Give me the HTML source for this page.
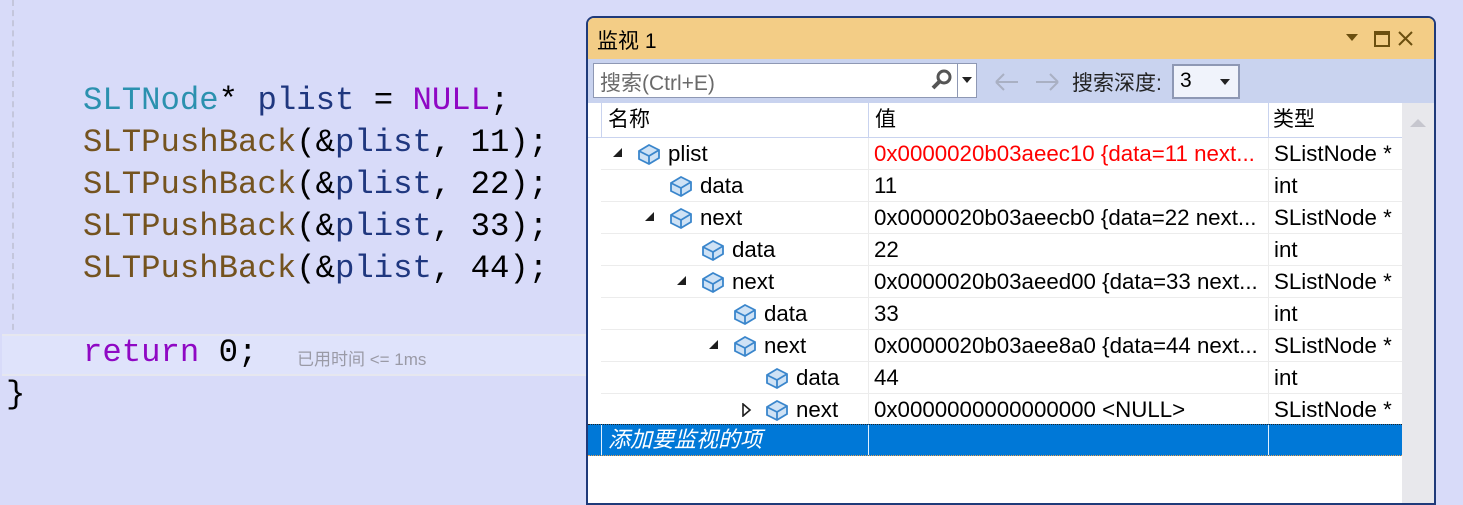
<!DOCTYPE html>
<html><head><meta charset="utf-8"><style>
body{margin:0;width:1463px;height:495px;background:#d8dbf9;position:relative;overflow:hidden;font-family:"Liberation Sans","Noto Sans CJK SC",sans-serif}
.code{position:absolute;left:83px;font-family:"Liberation Mono",monospace;font-size:32.3px;line-height:42px;white-space:pre;color:#000}
.t{color:#2b91af}.f{color:#74531f}.v{color:#1f377f}.k{color:#8f08c4}
.dash{position:absolute;left:12px;top:0;width:0;height:340px;border-left:2px dashed #c4c6dc}
.cur{position:absolute;left:2px;top:334px;width:600px;height:38px;background:#dfe3fb;border-top:2px solid #e6e7ef;border-bottom:2px solid #e6e7ef}
.panel{position:absolute;left:586px;top:16px;width:846px;height:485px;background:#fff;border:2px solid #1f3a7a;border-radius:8px 8px 0 0;overflow:hidden}
.title{position:absolute;left:0;top:0;width:846px;height:41px;background:#f3cd86;font-size:21px}
.tb{position:absolute;left:0;top:41px;width:846px;height:44px;background:#c9d3ef}
.a{position:absolute;white-space:nowrap}
.row{position:absolute;left:0;width:814px;height:32px;font-size:22.3px;line-height:32px}
.row:after{content:"";position:absolute;left:13px;right:0;bottom:0;border-bottom:1px solid #ececec}
.c2{position:absolute;left:280px;top:0;height:32px;border-left:1px solid #ececec;padding-left:5px}
.c3{position:absolute;left:680px;top:0;height:32px;border-left:1px solid #ececec;padding-left:5px}
</style></head><body>
<div class="dash"></div>
<div class="cur"></div>
<div class="code" style="top:80px"><span class="t">SLTNode</span>* <span class="v">plist</span> = <span class="k">NULL</span>;
<span class="f">SLTPushBack</span>(&amp;<span class="v">plist</span>, 11);
<span class="f">SLTPushBack</span>(&amp;<span class="v">plist</span>, 22);
<span class="f">SLTPushBack</span>(&amp;<span class="v">plist</span>, 33);
<span class="f">SLTPushBack</span>(&amp;<span class="v">plist</span>, 44);

<span class="k">return</span> 0;</div>
<div class="a" style="left:297px;top:345px;font-size:17px;color:#9a9aa6">已用时间 &lt;= 1ms</div>
<div class="code" style="left:6px;top:374px">}</div>

<div class="panel">
<div class="title"><span class="a" style="left:9px;top:7px">监视 1</span>
<svg class="a" style="left:756px;top:12px" width="70" height="18"><path d="M2 4h12l-6 7z" fill="#6b4f0f"/><rect x="31" y="2" width="14" height="14" fill="none" stroke="#6b4f0f" stroke-width="2"/><rect x="31" y="2" width="14" height="3" fill="#6b4f0f"/><path d="M55 2l13 13M68 2l-13 13" stroke="#6b4f0f" stroke-width="2"/></svg></div>
<div class="tb">
<div class="a" style="left:5px;top:4px;width:384px;height:35px;background:#fff;border:1px solid #8e98b4;box-sizing:border-box"></div>
<div class="a" style="left:12px;top:8px;font-size:21px;color:#6a6a6a">搜索(Ctrl+E)</div>
<svg class="a" style="left:342px;top:9px" width="24" height="24"><circle cx="14" cy="9" r="6" fill="none" stroke="#555" stroke-width="3"/><path d="M10 13L3 20" stroke="#555" stroke-width="4"/></svg>
<div class="a" style="left:369px;top:5px;width:1px;height:34px;background:#8e98b4"></div>
<svg class="a" style="left:374px;top:18px" width="12" height="8"><path d="M0 0h10l-5 6z" fill="#222"/></svg>
<svg class="a" style="left:405px;top:12px" width="70" height="22"><path d="M3 11h22M3 11l8-8M3 11l8 8M43 11h22M65 11l-8-8M65 11l-8 8" stroke="#a9b0c3" stroke-width="2" fill="none"/></svg>
<div class="a" style="left:484px;top:8px;font-size:21px;color:#222">搜索深度:</div>
<div class="a" style="left:584px;top:5px;width:68px;height:35px;background:#f0f3fb;border:2px solid #8e98b4;box-sizing:border-box;font-size:21px;padding:3px 6px">3</div>
<svg class="a" style="left:632px;top:20px" width="12" height="8"><path d="M0 0h10l-5 6z" fill="#222"/></svg>
</div>
<div class="a" style="left:814px;top:85px;width:32px;height:400px;background:#e8e8ec"></div>
<svg class="a" style="left:821px;top:100px" width="18" height="10"><path d="M1 9h16l-8-8z" fill="#c6c6ce"/></svg>
<div class="a" style="left:0;top:85px;width:814px;height:34px;border-bottom:1px solid #c9d3ef;font-size:21px;line-height:34px">
<div class="a" style="left:13px;top:0;height:34px;border-left:1px solid #c9d3ef;padding-left:6px">名称</div>
<div class="a" style="left:280px;top:0;height:34px;border-left:1px solid #c9d3ef;padding-left:6px">值</div>
<div class="a" style="left:680px;top:0;height:34px;border-left:1px solid #c9d3ef;padding-left:4px">类型</div>
</div>
<svg width="0" height="0" style="position:absolute"><defs><g id="cube"><path d="M2 9l10-6 10 5v8l-10 6-10-5z" fill="#cfe2f5" stroke="#3a86cc" stroke-width="1.8"/><path d="M2 9l10 5 10-6M12 14v8" fill="none" stroke="#3a86cc" stroke-width="1.8"/></g></defs></svg>
<div id="rows"></div>
<div class="a" style="left:0;top:406px;width:814px;height:32px;background:#0078d7;border-top:1px dotted #222;border-bottom:1px dotted #e8a050;box-sizing:border-box;font-size:22px;color:#fff;font-style:italic">
<div class="a" style="left:13px;top:0;height:30px;border-left:1px solid #e0f0ff;padding-left:6px;line-height:30px">添加要监视的项</div>
<div class="a" style="left:280px;top:0;height:30px;border-left:1px solid #e0f0ff"></div>
<div class="a" style="left:680px;top:0;height:30px;border-left:1px solid #e0f0ff"></div>
</div>
</div>
<script>
var R=[[0,'e','plist','0x0000020b03aeec10 {data=11 next...','SListNode *',1],[1,'','data','11','int'],[1,'e','next','0x0000020b03aeecb0 {data=22 next...','SListNode *'],[2,'','data','22','int'],[2,'e','next','0x0000020b03aeed00 {data=33 next...','SListNode *'],[3,'','data','33','int'],[3,'e','next','0x0000020b03aee8a0 {data=44 next...','SListNode *'],[4,'','data','44','int'],[4,'c','next','0x0000000000000000 &lt;NULL&gt;','SListNode *']];
var h='';R.forEach(function(r,i){var x=32*r[0];var top=120+32*i;
var tri='';
if(r[1]=='e')tri='<svg style="position:absolute;left:'+(24+x)+'px;top:9px" width="12" height="12"><path d="M10 1v9h-9z" fill="#1e1e1e"/></svg>';
if(r[1]=='c')tri='<svg style="position:absolute;left:'+(25+x)+'px;top:9px" width="12" height="14"><path d="M2 1l7 6-7 6z" fill="none" stroke="#1e1e1e" stroke-width="1.6"/></svg>';
h+='<div class="row" style="top:'+top+'px">'+tri+
'<svg style="position:absolute;left:'+(49+x)+'px;top:4px" width="25" height="25"><use href="#cube"/></svg><span class="a" style="left:'+(80+x)+'px">'+r[2]+'</span><div class="c2"'+(r[5]?' style="color:#f00"':'')+'>'+r[3]+'</div><div class="c3">'+r[4]+'</div></div>';});
document.getElementById('rows').innerHTML=h;
</script>
</body></html>
